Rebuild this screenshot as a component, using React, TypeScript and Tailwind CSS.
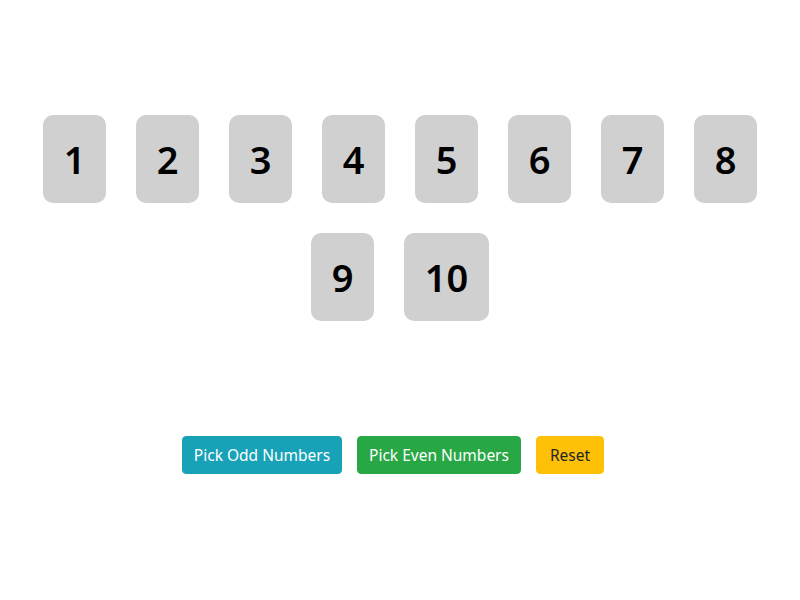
import { useState } from 'react';

const numbers = [1, 2, 3, 4, 5, 6, 7, 8, 9, 10];

export default function App() {
  const [picked, setPicked] = useState<'odd' | 'even' | null>(null);

  const isPicked = (n: number) =>
    (picked === 'odd' && n % 2 === 1) || (picked === 'even' && n % 2 === 0);

  return (
    <div className="min-h-screen bg-white pt-[100px] font-['Noto_Sans',sans-serif]">
      {/* Number cards */}
      <div className="flex flex-wrap justify-center">
        {numbers.map((n) => (
          <div
            key={n}
            className={`m-[15px] flex h-[88px] items-center justify-center rounded-[10px] text-[38px] font-semibold text-black ${
              n < 10 ? 'w-[63px]' : 'w-[85px]'
            } ${isPicked(n) ? 'bg-[#9fd6df]' : 'bg-[#d0d0d0]'}`}
          >
            {n}
          </div>
        ))}
      </div>

      {/* Actions */}
      <div className="mt-[100px] flex justify-center gap-[15px] pr-[14px]">
        <button
          onClick={() => setPicked('odd')}
          className="w-[160px] rounded border border-[#17a2b8] bg-[#17a2b8] py-1.5 text-[15.5px] leading-6 text-white"
        >
          Pick Odd Numbers
        </button>
        <button
          onClick={() => setPicked('even')}
          className="w-[164px] rounded border border-[#28a745] bg-[#28a745] py-1.5 text-[15.5px] leading-6 text-white"
        >
          Pick Even Numbers
        </button>
        <button
          onClick={() => setPicked(null)}
          className="w-[68px] rounded border border-[#ffc107] bg-[#ffc107] py-1.5 text-[15.5px] leading-6 text-[#212529]"
        >
          Reset
        </button>
      </div>
    </div>
  );
}
